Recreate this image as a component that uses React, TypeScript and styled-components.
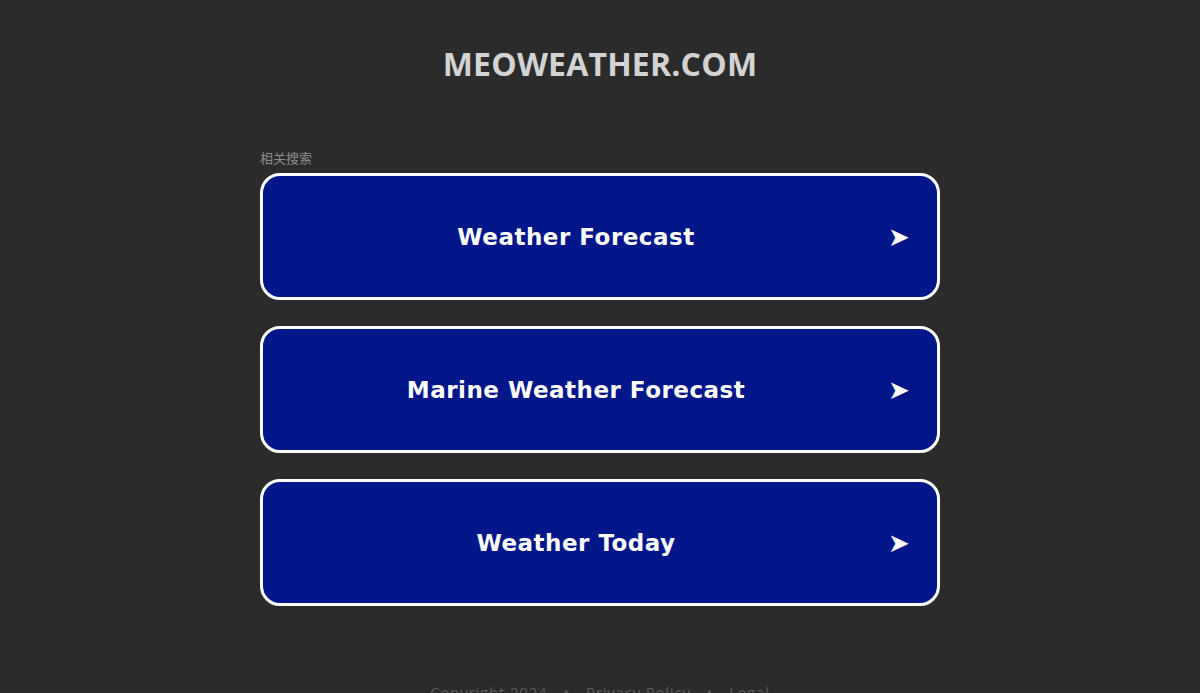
import React from "react";
import styled, { createGlobalStyle } from "styled-components";

const Global = createGlobalStyle`
  html, body { margin: 0; padding: 0; background: #2b2b2b; }
  body { font-family: "Open Sans", "Liberation Sans", sans-serif; }
`;

const Page = styled.div`
  display: flex;
  flex-direction: column;
  align-items: center;
`;

const Title = styled.h1`
  margin: 43px 0 0;
  font-family: "Open Sans", "Liberation Sans", sans-serif;
  font-weight: 700;
  font-size: 32px;
  line-height: 42px;
  color: #d3d3d3;
  letter-spacing: 0.2px;
`;

const Block = styled.div`
  width: 680px;
  margin-top: 64px;
  display: flex;
  flex-direction: column;
`;

const Label = styled.div`
  font-family: "Noto Sans CJK SC", sans-serif;
  font-size: 13px;
  line-height: 18px;
  color: #8c8c8c;
  margin-bottom: 6px;
`;

const List = styled.div`
  display: flex;
  flex-direction: column;
  gap: 26px;
`;

const Link = styled.a`
  box-sizing: border-box;
  height: 127px;
  display: flex;
  align-items: center;
  background: #001689;
  border: 3px solid #ffffff;
  border-radius: 20px;
  color: #ffffff;
  text-decoration: none;
  padding-right: 28px;
`;

const LinkText = styled.span`
  flex: 1;
  text-align: center;
  font-family: "DejaVu Sans", Verdana, sans-serif;
  font-weight: 700;
  font-size: 23px;
  letter-spacing: 0.5px;
`;

const Arrow = styled.span`
  font-family: "DejaVu Sans", sans-serif;
  font-size: 26px;
  line-height: 1;
  width: 20px;
  display: flex;
  justify-content: center;
`;

const Footer = styled.div`
  margin-top: 76px;
  display: flex;
  gap: 16px;
  font-family: "Open Sans", "Liberation Sans", sans-serif;
  font-size: 15px;
  color: #5a5a5a;
  letter-spacing: 0.8px;
`;

const items = ["Weather Forecast", "Marine Weather Forecast", "Weather Today"];

export default function App() {
  return (
    <>
      <Global />
      <Page>
        <Title>MEOWEATHER.COM</Title>
        <Block>
          <Label>相关搜索</Label>
          <List>
            {items.map((t) => (
              <Link key={t} href="#">
                <LinkText>{t}</LinkText>
                <Arrow>➤</Arrow>
              </Link>
            ))}
          </List>
        </Block>
        <Footer>
          <span>Copyright 2024</span>
          <span>•</span>
          <span>Privacy Policy</span>
          <span>•</span>
          <span>Legal</span>
        </Footer>
      </Page>
    </>
  );
}
